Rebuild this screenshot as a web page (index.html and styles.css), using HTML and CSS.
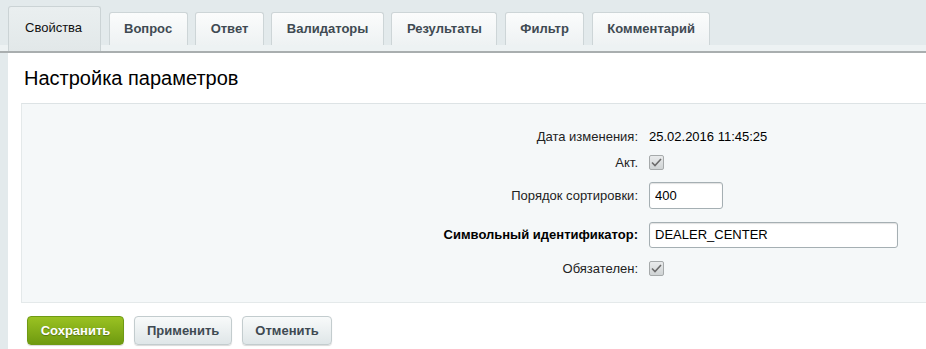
FILE: index.html
```
<!DOCTYPE html>
<html lang="ru">

<head>
    <meta charset="UTF-8">
    <meta name="viewport" content="width=device-width, initial-scale=1.0">
    <link rel="stylesheet" href="styles.css">
    <title>Настройка параметров</title>
</head>

<body>
    <div class="tabs">
        <div class="tab active">Свойства</div>
        <div class="tab">Вопрос</div>
        <div class="tab">Ответ</div>
        <div class="tab">Валидаторы</div>
        <div class="tab">Результаты</div>
        <div class="tab">Фильтр</div>
        <div class="tab">Комментарий</div>
    </div>

    <div class="panel">
        <h1 class="title">Настройка параметров</h1>

        <div class="form">
            <div class="row row-text">
                <div class="label">Дата изменения:</div>
                <div class="value">25.02.2016 11:45:25</div>
            </div>
            <div class="row row-check">
                <div class="label">Акт.</div>
                <div class="value">
                    <span class="check">
                        <svg width="11" height="9" viewBox="0 0 11 9"><path d="M1 4.5 L4 7.5 L10 1" fill="none" stroke="#6b6b6b" stroke-width="1.6" /></svg>
                    </span>
                </div>
            </div>
            <div class="row row-input">
                <div class="label">Порядок сортировки:</div>
                <div class="value"><input class="field short" type="text" value="400"></div>
            </div>
            <div class="row row-input2">
                <div class="label bold">Символьный идентификатор:</div>
                <div class="value"><input class="field long" type="text" value="DEALER_CENTER"></div>
            </div>
            <div class="row row-check">
                <div class="label">Обязателен:</div>
                <div class="value">
                    <span class="check">
                        <svg width="11" height="9" viewBox="0 0 11 9"><path d="M1 4.5 L4 7.5 L10 1" fill="none" stroke="#6b6b6b" stroke-width="1.6" /></svg>
                    </span>
                </div>
            </div>
        </div>

        <div class="buttons">
            <button class="btn green">Сохранить</button>
            <button class="btn">Применить</button>
            <button class="btn">Отменить</button>
        </div>
    </div>
</body>

</html>
```

FILE: styles.css
```
body {
    margin: 0;
    background: #e3eaec;
    font-family: "Liberation Sans", Arial, sans-serif;
    font-size: 13px;
    color: #000;
    overflow: hidden;
}

/* tab strip */
.tabs {
    display: flex;
    align-items: flex-end;
    gap: 7.5px;
    height: 51px;
    padding-left: 8px;
    background: linear-gradient(to bottom, #e3eaec 45px, #edf2f3 45px);
    border-bottom: 2px solid #a9aeaf;
}

.tab {
    height: 33px;
    line-height: 31px;
    margin-bottom: 6px;
    padding: 0 14.5px;
    box-sizing: border-box;
    border: 1px solid #cdd5d7;
    border-bottom: none;
    border-radius: 3px 3px 0 0;
    background: linear-gradient(to bottom, #fbfcfc, #eef2f3);
    color: #3f4a52;
    font-weight: bold;
}

.tab.active {
    height: 45px;
    line-height: 41px;
    margin-bottom: 0;
    padding: 0 16px;
    width: 93px;
    background: linear-gradient(to bottom, #eaeff0, #e2e8e9);
    border-color: #cbd3d5;
    color: #111;
    font-weight: normal;
}

/* white panel */
.panel {
    margin-left: 8px;
    background: #fff;
    min-height: 300px;
}

.title {
    margin: 0;
    padding: 14px 0 0 16px;
    height: 36px;
    font-size: 20px;
    font-weight: normal;
    line-height: 22px;
}

.form {
    margin-left: 13px;
    padding: 19px 0 20px;
    background: #f5f8f9;
    border-top: 1px solid #dde3e5;
    border-left: 1px solid #e4e9ea;
    border-bottom: 1px solid #e4e9ea;
}

.row {
    display: grid;
    grid-template-columns: 616px 1fr;
    column-gap: 11px;
    align-items: center;
}

.row-text {
    height: 26px;
}

.row-check {
    height: 27px;
}

.row-input {
    height: 38px;
}

.row-input2 {
    height: 41px;
}

.label {
    text-align: right;
    color: #222;
}

.label.bold {
    font-weight: bold;
    color: #000;
}

.value {
    display: flex;
    align-items: center;
}

.check {
    display: flex;
    align-items: center;
    justify-content: center;
    width: 13px;
    height: 13px;
    border: 1px solid #a6aaab;
    border-radius: 2px;
    background: linear-gradient(to bottom, #e9ebec, #cfd3d4);
}

.field {
    height: 27px;
    box-sizing: border-box;
    border: 1px solid #a5afb3;
    border-radius: 3px;
    box-shadow: inset 0 1px 1px rgba(0, 0, 0, 0.12);
    padding: 0 5px;
    font-family: "Liberation Sans", Arial, sans-serif;
    font-size: 13px;
    color: #000;
    background: #fff;
}

.short {
    width: 74px;
}

.long {
    width: 249px;
    height: 26px;
}

/* buttons */
.buttons {
    display: flex;
    gap: 10px;
    padding: 13px 0 0 19px;
}

.btn {
    height: 29px;
    padding: 0 12px;
    border: 1px solid #c3ccce;
    border-radius: 4px;
    background: linear-gradient(to bottom, #f8fafa, #dfe6e8);
    box-shadow: 0 1px 1px rgba(0, 0, 0, 0.15);
    font-family: "Liberation Sans", Arial, sans-serif;
    font-size: 13px;
    font-weight: bold;
    color: #3f4a52;
}

.btn.green {
    width: 97px;
    border-color: #6f9a14;
    background: linear-gradient(to bottom, #9ac222, #6f9a10);
    color: #fff;
    text-shadow: 0 1px 1px rgba(0, 0, 0, 0.3);
}
```
